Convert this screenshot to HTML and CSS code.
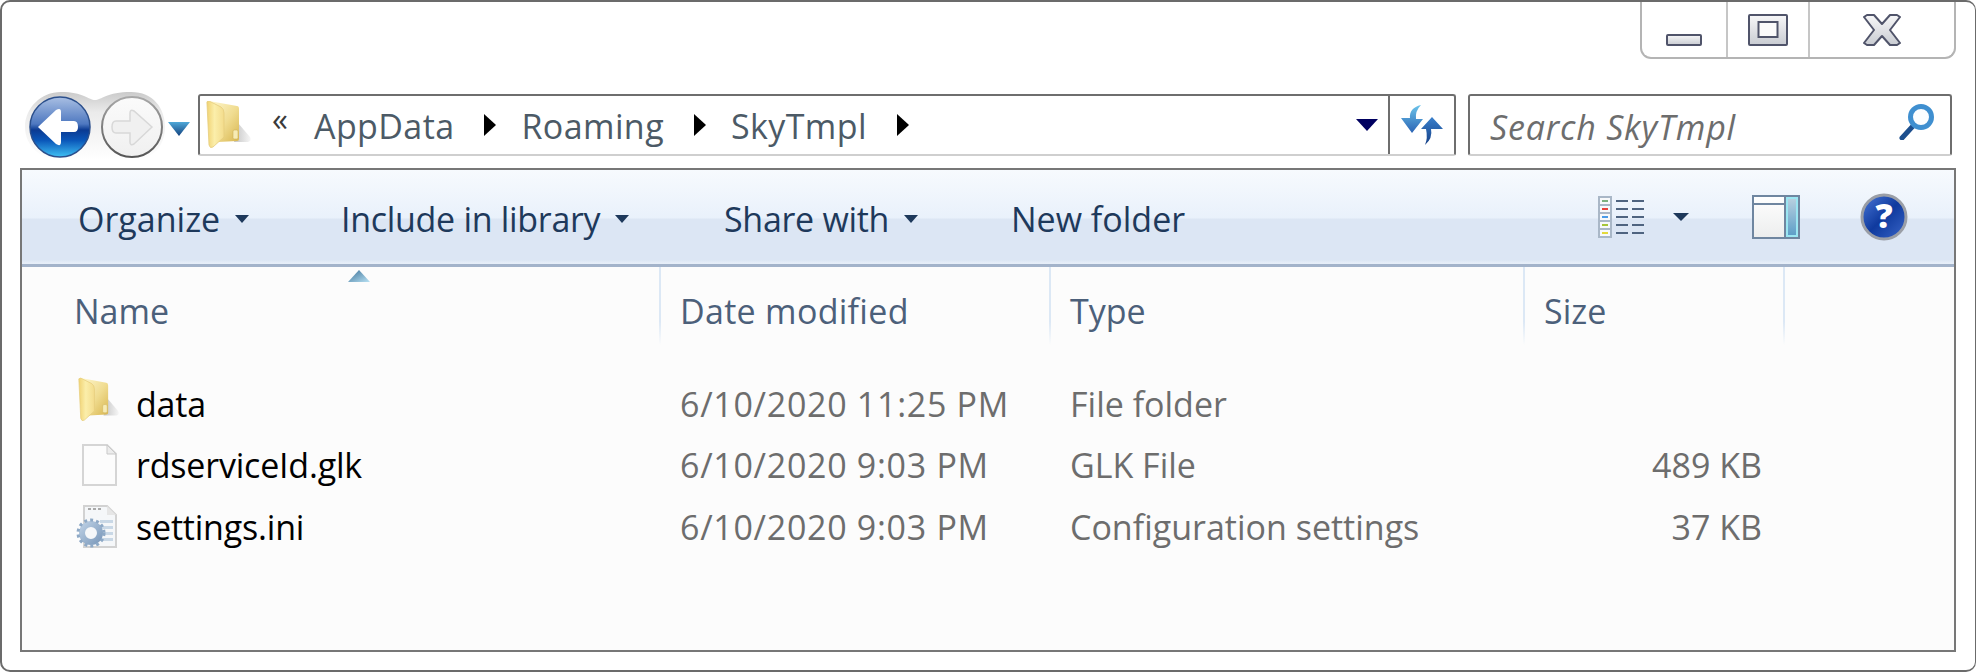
FILE: index.html
```html
<!DOCTYPE html>
<html lang="en">
<head>
<meta charset="utf-8">
<title>SkyTmpl</title>
<link rel="stylesheet" href="styles.css">
</head>
<body>
<svg class="defs" width="0" height="0" aria-hidden="true">
  <defs>
    <linearGradient id="fBack" x1="0" y1="0" x2="1" y2="1"><stop offset="0" stop-color="#fff8d0"/><stop offset=".55" stop-color="#f0dc90"/><stop offset="1" stop-color="#d8b650"/></linearGradient>
    <linearGradient id="fFront" x1="0" y1="0" x2="1" y2="0"><stop offset="0" stop-color="#f0d272"/><stop offset=".45" stop-color="#fbeeaa"/><stop offset="1" stop-color="#f3dc8c"/></linearGradient>
    <linearGradient id="fShadow" x1="0" y1="0" x2="1" y2="0"><stop offset="0" stop-color="#c4c4c4"/><stop offset="1" stop-color="#f6f6f6"/></linearGradient>
    <linearGradient id="gear" x1="0" y1="0" x2="1" y2="1"><stop offset="0" stop-color="#b9cde2"/><stop offset="1" stop-color="#7f9cbd"/></linearGradient>
    <symbol id="folder" viewBox="0 0 46 48">
      <path d="M32 22 L44 36 Q46 40 42 41 H28Z" fill="url(#fShadow)"/>
      <path d="M3 0 L31 5 Q33 5 33 8 V38 Q33 40 31 40 L12 41 Z" fill="url(#fBack)"/>
      <path d="M1 3 Q0 0 3 0 L15 6 Q18 8 18 12 V36 L7 46 Q4 48 3 44 Z" fill="url(#fFront)" stroke="#e6cd7c" stroke-width=".8"/>
      <rect x="27" y="29" width="5" height="9" rx="1.5" fill="#f7ebb4" stroke="#cfb45d" stroke-width=".6"/>
    </symbol>
  </defs>
</svg>
<main class="window">
  <div class="caption-row">
    <div class="caption">
      <div class="cap-btn cap-min">
        <svg width="36" height="12" viewBox="0 0 36 12"><defs><linearGradient id="cg" x1="0" y1="0" x2="0" y2="1"><stop offset="0" stop-color="#f7f7f8"/><stop offset="1" stop-color="#c9ccd2"/></linearGradient></defs><rect x="1" y="1" width="34" height="10" rx="1" fill="url(#cg)" stroke="#50546a" stroke-width="2"/></svg>
      </div>
      <div class="cap-btn cap-max">
        <svg width="40" height="32" viewBox="0 0 40 32"><rect x="1" y="1" width="38" height="30" rx="1" fill="url(#cg)" stroke="#50546a" stroke-width="2"/><rect x="10.500" y="8" width="19" height="15" fill="#fbfbfb" stroke="#50546a" stroke-width="2"/></svg>
      </div>
      <div class="cap-btn cap-close">
        <svg width="38" height="32" viewBox="0 0 38 32"><path d="M1 3 L4 1 H11 L19 10 L27 1 H34 L37 3 L27 16 L37 29 L34 31 H27 L19 22 L11 31 H4 L1 29 L11 16 Z" fill="url(#cg)" stroke="#50546a" stroke-width="2" stroke-linejoin="round"/></svg>
      </div>
    </div>
  </div>

  <div class="nav-row">
    <div class="nav-buttons">
      <svg width="156" height="72" viewBox="0 0 156 72">
        <defs>
          <linearGradient id="navBg" x1="0" y1="0" x2="0" y2="1"><stop offset="0" stop-color="#bdbdbd"/><stop offset=".3" stop-color="#e6e6e6"/><stop offset="1" stop-color="#ffffff"/></linearGradient>
          <linearGradient id="backG" x1="0" y1="0" x2="0" y2="1"><stop offset="0" stop-color="#a9bfe3"/><stop offset=".45" stop-color="#4e78c0"/><stop offset=".55" stop-color="#0b3a92"/><stop offset=".72" stop-color="#0a56b8"/><stop offset="1" stop-color="#3fc0f4"/></linearGradient>
          <linearGradient id="fwdG" x1="0" y1="0" x2="0" y2="1"><stop offset="0" stop-color="#fbfbfb"/><stop offset="1" stop-color="#f0f0f0"/></linearGradient>
          <linearGradient id="fwdS" x1="0" y1="0" x2="0" y2="1"><stop offset="0" stop-color="#a8a8a8"/><stop offset="1" stop-color="#555"/></linearGradient>
        </defs>
        <path d="M38 2 C60 2 66 10 72 10 C78 10 84 2 108 2 C130 2 142 18 142 37 C142 56 130 70 108 70 H38 C18 70 2 56 2 37 C2 18 18 2 38 2Z" fill="url(#navBg)" opacity=".8"/>
        <circle cx="37" cy="37" r="30" fill="url(#backG)" stroke="#2b4f8c" stroke-width="1.5"/>
        <path d="M15 37 L33 20 Q38 17 38 22 V31 H51 Q55 31 55 37 Q55 42 51 42 H38 V52 Q38 57 33 54 Z" fill="#fff"/>
        <circle cx="109" cy="37" r="30" fill="url(#fwdG)" stroke="url(#fwdS)" stroke-width="2"/>
        <path d="M129 37 L111 21 Q107 19 107 23 V31 H93 Q89 31 89 37 Q89 43 93 43 H107 V52 Q107 56 111 54 Z" fill="#f0f0f0" stroke="#d8d8d8" stroke-width="1.5"/>
      </svg>
      <svg class="nav-drop" width="22" height="14" viewBox="0 0 22 14"><defs><linearGradient id="dropG" x1="0" y1="0" x2="0" y2="1"><stop offset="0" stop-color="#4fa8d8"/><stop offset="1" stop-color="#13427f"/></linearGradient></defs><path d="M0 0 H22 L11 14 Z" fill="url(#dropG)"/></svg>
    </div>
    <div class="address">
      <svg class="addr-folder" width="46" height="48"><use href="#folder"/></svg>
      <span class="chev">«</span>
      <span class="crumb">AppData</span>
      <span class="tri"></span>
      <span class="crumb">Roaming</span>
      <span class="tri"></span>
      <span class="crumb">SkyTmpl</span>
      <span class="tri"></span>
      <span class="spacer"></span>
      <span class="addr-drop"></span>
      <span class="refresh">
        <svg width="42" height="40" viewBox="0 0 42 40"><defs><linearGradient id="rf1" x1="0" y1="0" x2="0" y2="1"><stop offset="0" stop-color="#6cc4ea"/><stop offset="1" stop-color="#2a63b4"/></linearGradient><linearGradient id="rf2" x1="0" y1="0" x2="0" y2="1"><stop offset="0" stop-color="#3a80cc"/><stop offset="1" stop-color="#143f86"/></linearGradient></defs><path d="M20 0 Q8 3 9 13 H0 L11 28 L22 14 H15 Q14 6 20 0Z" fill="url(#rf1)"/><path d="M24 40 Q32 33 30 24 H42 L31 12 L20 24 H25 Q27 33 24 40Z" fill="url(#rf2)"/></svg>
      </span>
    </div>
    <div class="search">
      <span class="search-text">Search SkyTmpl</span>
      <svg width="36" height="36" viewBox="0 0 36 36"><path d="M14 22 L3 34" stroke="#1d4f8e" stroke-width="5" stroke-linecap="round"/><circle cx="22" cy="13" r="10.500" fill="#fbfdff" stroke="#3f8fd0" stroke-width="5"/></svg>
    </div>
  </div>

  <section class="panel">
    <div class="toolbar">
      <div class="tool tool-org">Organize<span class="caret"></span></div>
      <div class="tool tool-inc">Include in library<span class="caret"></span></div>
      <div class="tool tool-share">Share with<span class="caret"></span></div>
      <div class="tool">New folder</div>
      <div class="tool-right">
        <svg width="46" height="42" viewBox="0 0 46 42">
          <g fill="#f7f9fb" stroke="#a9b7c7" stroke-width="2"><rect x="1" y="1" width="12" height="8"/><rect x="1" y="9" width="12" height="8"/><rect x="1" y="17" width="12" height="8"/><rect x="1" y="25" width="12" height="8"/><rect x="1" y="33" width="12" height="8"/></g>
          <rect x="4" y="4" width="6" height="2" fill="#7eb07e"/><rect x="4" y="12" width="6" height="2" fill="#e8423c"/><rect x="4" y="20" width="6" height="2" fill="#4a9be8"/><rect x="4" y="28" width="6" height="2" fill="#a6c63a"/><rect x="4" y="36" width="6" height="2" fill="#e3d93a"/>
          <g fill="#4f6480"><rect x="18" y="4" width="12" height="2"/><rect x="34" y="4" width="12" height="2"/><rect x="18" y="12" width="12" height="2"/><rect x="34" y="12" width="12" height="2"/><rect x="18" y="20" width="12" height="2"/><rect x="34" y="20" width="12" height="2"/><rect x="18" y="28" width="12" height="2"/><rect x="34" y="28" width="12" height="2"/><rect x="18" y="36" width="12" height="2"/><rect x="34" y="36" width="12" height="2"/></g>
        </svg>
        <span class="caret caret-view"></span>
        <svg class="pane-ico" width="48" height="44" viewBox="0 0 48 44">
          <defs><linearGradient id="pn" x1="0" y1="0" x2="0" y2="1"><stop offset="0" stop-color="#ffffff"/><stop offset="1" stop-color="#eceded"/></linearGradient><linearGradient id="pb" x1="0" y1="0" x2="0" y2="1"><stop offset="0" stop-color="#b6cfdf"/><stop offset="1" stop-color="#5e9fc8"/></linearGradient></defs>
          <rect x="1" y="1" width="46" height="42" fill="url(#pn)" stroke="#6f86a0" stroke-width="2"/>
          <rect x="2" y="8" width="31" height="2" fill="#6f86a0"/>
          <rect x="32" y="2" width="2" height="40" fill="#6f86a0"/>
          <rect x="34" y="2" width="12" height="40" fill="#9be6f2"/>
          <rect x="36" y="4" width="8" height="36" fill="url(#pb)"/>
        </svg>
        <svg class="help-ico" width="48" height="48" viewBox="0 0 48 48">
          <defs><linearGradient id="hp" x1="0" y1="0" x2="1" y2="1"><stop offset="0" stop-color="#4a78d8"/><stop offset=".5" stop-color="#0f3a9e"/><stop offset="1" stop-color="#3a66c8"/></linearGradient></defs>
          <circle cx="24" cy="24" r="22" fill="url(#hp)" stroke="#9a9ea6" stroke-width="3"/>
          <text class="help-q" x="24" y="35" text-anchor="middle">?</text>
        </svg>
      </div>
    </div>
    <div class="sort-mark">
      <svg width="22" height="12" viewBox="0 0 22 12"><defs><linearGradient id="st" x1="0" y1="0" x2="1" y2="1"><stop offset="0" stop-color="#3a6f96"/><stop offset="1" stop-color="#b9e2f4"/></linearGradient></defs><path d="M0 12 L11 0 L22 12Z" fill="url(#st)"/></svg>
    </div>
    <div class="list">
      <div class="row head">
        <div class="cell c-name">Name</div>
        <div class="cell c-date head-date">Date modified</div>
        <div class="cell c-type">Type</div>
        <div class="cell c-size">Size</div>
        <div class="cell c-end"></div>
      </div>
      <div class="row item first">
        <div class="c-name name-cell"><span class="slot"><svg class="ico ico-folder" width="42" height="48"><use href="#folder"/></svg></span>data</div>
        <div class="c-date date muted">6/10/2020 11:25 PM</div>
        <div class="c-type muted">File folder</div>
        <div class="c-size muted"></div>
      </div>
      <div class="row item">
        <div class="c-name name-cell">
          <span class="slot"><svg class="ico" width="42" height="44" viewBox="0 0 42 44"><path d="M7 2 H31 L40 11 V42 H7Z" fill="#fcfcfc" stroke="#d5d5d5" stroke-width="2"/><path d="M31 2 V11 H40Z" fill="#ececec" stroke="#c9c9c9"/></svg></span>rdserviceId.glk</div>
        <div class="c-date date muted">6/10/2020 9:03 PM</div>
        <div class="c-type muted">GLK File</div>
        <div class="c-size muted num">489 KB</div>
      </div>
      <div class="row item">
        <div class="c-name name-cell">
          <span class="slot"><svg class="ico" width="42" height="44" viewBox="0 0 42 44">
            <path d="M8 1 H31 L40 10 V42 H8Z" fill="#f5f7f9" stroke="#d2d2d2" stroke-width="2"/>
            <path d="M31 1 V10 H40Z" fill="#e6e6e6"/>
            <g fill="#c9d8e6"><rect x="24" y="15" width="13" height="3"/><rect x="24" y="21" width="13" height="3"/><rect x="24" y="27" width="13" height="3"/><rect x="24" y="33" width="13" height="3"/></g>
            <g fill="#a9a9a9"><rect x="12" y="3" width="3" height="2"/><rect x="17" y="3" width="3" height="2"/><rect x="22" y="3" width="3" height="2"/></g>
            <circle cx="15" cy="28" r="9" fill="none" stroke="url(#gear)" stroke-width="6"/>
            <circle cx="15" cy="28" r="13" fill="none" stroke="#8ea9c6" stroke-width="3" stroke-dasharray="3 3"/>
          </svg></span>settings.ini</div>
        <div class="c-date date muted">6/10/2020 9:03 PM</div>
        <div class="c-type muted">Configuration settings</div>
        <div class="c-size muted num">37 KB</div>
      </div>
    </div>
  </section>
</main>
</body>
</html>
```
FILE: styles.css
```css
* { box-sizing: border-box; }
html, body { margin: 0; padding: 0; background: #fff; }
body { width: 1976px; height: 672px; overflow: hidden; font-family: "Open Sans", "Noto Sans", sans-serif; font-size: 34px; }
.defs { position: absolute; }
svg { display: block; flex: none; }

.window { width: 1976px; height: 672px; background: #fff; border: 2px solid #6b6b6b; border-right-width: 1px; border-radius: 10px; display: flex; flex-direction: column; padding: 0 19px 18px 18px; }

.caption-row { display: flex; justify-content: flex-end; height: 92px; }
.caption { width: 316px; height: 57px; border: 2px solid #b4b4b4; border-top: 0; border-radius: 0 0 11px 11px; display: flex; }
.cap-btn { display: flex; justify-content: center; border-right: 2px solid #c6c6c6; }
.cap-min { width: 86px; padding-top: 32px; }
.cap-max { width: 82px; padding-top: 12px; }
.cap-close { flex: 1; border-right: 0; padding-top: 12px; }

.nav-row { display: flex; align-items: center; height: 62px; }
.nav-buttons { display: flex; align-items: center; width: 178px; margin-left: 3px; margin-right: -3px; height: 72px; position: relative; top: 1px; flex: none; }
.nav-drop { margin-top: 6px; margin-left: -11px; }

.address { width: 1258px; height: 62px; border: 2px solid #6e6e6e; border-bottom-color: #cfcfcf; border-radius: 3px; display: flex; align-items: center; color: #4c5a66; flex: none; }
.addr-folder { margin-left: 6px; }
.chev { margin-left: 20px; width: 42px; font-size: 32px; line-height: 32px; color: #3a3a3a; position: relative; top: -6px; }
.crumb { font-size: 34px; letter-spacing: .4px; padding-top: 2px; }
.tri { width: 0; height: 0; border-left: 12px solid #000; border-top: 11px solid transparent; border-bottom: 11px solid transparent; margin: 0 25px 0 30px; }
.spacer { flex: 1; }
.addr-drop { width: 0; height: 0; border-left: 11px solid transparent; border-right: 11px solid transparent; border-top: 12px solid #000060; margin-right: 10px; }
.refresh { width: 66px; height: 58px; border-left: 2px solid #6e6e6e; display: flex; align-items: center; justify-content: center; }

.search { width: 484px; height: 62px; margin-left: 12px; border: 2px solid #6e6e6e; border-bottom-color: #cfcfcf; border-radius: 3px; display: flex; align-items: center; justify-content: space-between; padding: 0 15px 6px 20px; flex: none; }
.search-text { font-style: italic; color: #6d6d6d; font-size: 34px; letter-spacing: .8px; position: relative; top: 5px; }

.panel { flex: 1; margin-top: 12px; border: 2px solid #777; background: #fcfcfc; display: flex; flex-direction: column; min-height: 0; position: relative; }
.toolbar { height: 97px; flex: none; display: flex; align-items: center; padding: 0 0 0 56px; color: #1e395b; border-bottom: 3px solid #a3b3ca; background: linear-gradient(#f7fafe 0, #e9f1fb 48px, #dce6f4 49px, #dce6f4 90px, #e6eef8 93px); }
.tool { display: flex; align-items: center; margin-top: 3px; }
.tool-org { width: 263px; }
.tool-inc { width: 383px; letter-spacing: -.3px; }
.tool-share { width: 287px; letter-spacing: -.3px; }
.caret { width: 0; height: 0; border-left: 7px solid transparent; border-right: 7px solid transparent; border-top: 8px solid #1e395b; margin-left: 15px; }
.tool-right { margin-left: auto; display: flex; align-items: center; padding-right: 46px; }
.caret-view { margin-left: 29px; margin-right: 63px; border-left-width: 8px; border-right-width: 8px; }
.pane-ico { margin-right: 60px; }
.help-q { font-family: "Open Sans", sans-serif; font-weight: 800; font-size: 34px; fill: #fff; }

.sort-mark { position: absolute; left: 326px; top: 100px; }
.list { flex: 1; min-height: 0; }
.row { display: grid; grid-template-columns: 639px 390px 474px 260px 1fr; }
.head { height: 78px; color: #4c607a; align-items: stretch; }
.cell { display: flex; align-items: center; padding: 10px 0 0 19px; background: linear-gradient(#dce8f5 70%, rgba(220, 232, 245, 0)) right top / 2px 100% no-repeat; }
.head .c-name { padding-left: 52px; }
.head .c-end { background: none; }
.head-date { letter-spacing: .3px; }
.item { height: 61.5px; align-items: center; color: #000; }
.item.first { margin-top: 28px; }
.name-cell { display: flex; align-items: center; padding-left: 52px; letter-spacing: -.2px; }
.slot { width: 62px; padding-left: 2px; flex: none; }
.ico-folder { margin-left: 2px; position: relative; top: -4px; }
.c-date, .c-type { padding-left: 19px; }
.date { letter-spacing: .7px; }
.muted { color: #6d6d6d; }
.num { text-align: right; padding-right: 23px; }
```
